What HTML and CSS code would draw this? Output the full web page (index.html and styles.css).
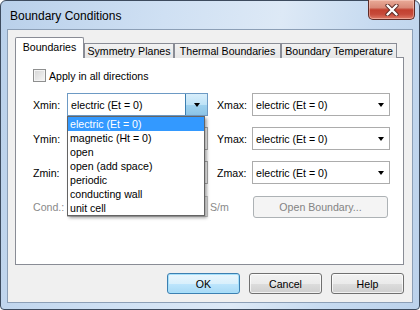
FILE: index.html
```html
<!DOCTYPE html>
<html lang="en">
<head>
    <meta charset="UTF-8">
    <title>Boundary Conditions</title>
    <link rel="stylesheet" href="styles.css">
</head>
<body>
    <div class="window">
        <div class="titlebar">
            <span class="title">Boundary Conditions</span>
            <div class="close">
                <svg width="14" height="12" viewBox="0 0 14 12">
                    <path d="M2.5 1.5 L11.5 10.5 M11.5 1.5 L2.5 10.5" stroke="#5a2a25" stroke-width="4.2" stroke-linecap="round"/>
                    <path d="M2.5 1.5 L11.5 10.5 M11.5 1.5 L2.5 10.5" stroke="#ffffff" stroke-width="2.4" stroke-linecap="round"/>
                </svg>
            </div>
        </div>

        <div class="client">
            <div class="tabs">
                <div class="tab active" style="width: 69px">Boundaries</div>
                <div class="tab" style="width: 90px">Symmetry Planes</div>
                <div class="tab" style="width: 107px">Thermal Boundaries</div>
                <div class="tab" style="width: 116px">Boundary Temperature</div>
            </div>

            <div class="panel">
                <label class="check"><span class="box"></span>Apply in all directions</label>

                <div class="grid">
                    <span class="lbl">Xmin:</span>
                    <div class="combo open">
                        <span class="value">electric (Et = 0)</span>
                        <span class="btn"><span class="arrow"></span></span>
                        <ul class="list">
                            <li class="selected">electric (Et = 0)</li>
                            <li>magnetic (Ht = 0)</li>
                            <li>open</li>
                            <li>open (add space)</li>
                            <li>periodic</li>
                            <li>conducting wall</li>
                            <li>unit cell</li>
                        </ul>
                    </div>
                    <span></span>
                    <span class="lbl">Xmax:</span>
                    <div class="combo">
                        <span class="value">electric (Et = 0)</span>
                        <span class="arrow"></span>
                    </div>

                    <span class="lbl">Ymin:</span>
                    <div class="combo">
                        <span class="value"></span>
                        <span class="arrow"></span>
                    </div>
                    <span></span>
                    <span class="lbl">Ymax:</span>
                    <div class="combo">
                        <span class="value">electric (Et = 0)</span>
                        <span class="arrow"></span>
                    </div>

                    <span class="lbl">Zmin:</span>
                    <div class="combo">
                        <span class="value"></span>
                        <span class="arrow"></span>
                    </div>
                    <span></span>
                    <span class="lbl">Zmax:</span>
                    <div class="combo">
                        <span class="value">electric (Et = 0)</span>
                        <span class="arrow"></span>
                    </div>

                    <span class="lbl disabled">Cond.:</span>
                    <div class="edit"></div>
                    <span class="lbl disabled unit">S/m</span>
                    <button class="push wide" disabled>Open Boundary...</button>
                </div>
            </div>

            <div class="actions">
                <button class="push default">OK</button>
                <button class="push">Cancel</button>
                <button class="push">Help</button>
            </div>
        </div>
    </div>
</body>
</html>
```

FILE: styles.css
```css
body {
    margin: 0;
    font-family: "Liberation Sans", Arial, sans-serif;
    font-size: 10.6px;
    color: #000;
    background: #fff;
}

.window {
    width: 420px;
    height: 310px;
    box-sizing: border-box;
    border: 1px solid #3d4b5e;
    border-radius: 6px 6px 4px 4px;
    padding: 0 6px 6px 6px;
    display: flex;
    flex-direction: column;
    background: linear-gradient(100deg, #b9d0ea 0%, #cfe0f3 35%, #dde9f6 60%, #c6daf0 80%, #bcd2eb 100%);
}

.titlebar {
    height: 28px;
    display: flex;
    justify-content: space-between;
    align-items: flex-start;
}

.title {
    font-size: 12px;
    margin-left: 3px;
    padding-top: 8px;
    color: #000;
}

.close {
    width: 47px;
    height: 20px;
    box-sizing: border-box;
    margin-top: -1px;
    margin-right: -2px;
    border: 1px solid #5e2b26;
    border-top: none;
    border-radius: 0 0 5px 5px;
    background: linear-gradient(#e9ab98 0%, #d98a78 40%, #c2402f 52%, #c64a3a 75%, #de7a66 100%);
    box-shadow: inset 0 0 0 1px rgba(255, 220, 210, 0.45);
    display: flex;
    align-items: center;
    justify-content: center;
}

.client {
    flex: 1;
    background: #f0f0f0;
    border: 1px solid #8c9fb6;
    padding: 8px 8px 0 7px;
    display: flex;
    flex-direction: column;
}

.tabs {
    display: flex;
    align-items: flex-end;
    height: 20px;
    position: relative;
    z-index: 1;
    margin-bottom: -1px;
}

.tab {
    box-sizing: border-box;
    height: 15px;
    border: 1px solid #898c95;
    border-bottom: none;
    text-align: center;
    line-height: 14px;
    background: linear-gradient(#f2f2f2, #e6e6e6);
    white-space: nowrap;
}

.tab.active {
    height: 21px;
    line-height: 18px;
    background: #fff;
    border-radius: 2px 2px 0 0;
}

.panel {
    box-sizing: border-box;
    height: 208px;
    background: #fff;
    border: 1px solid #898c95;
    padding: 11px 17px 0 17px;
}

.check {
    display: flex;
    align-items: center;
    gap: 3px;
    height: 13px;
}

.box {
    width: 13px;
    height: 13px;
    box-sizing: border-box;
    border: 1px solid #8e8f8f;
    background: linear-gradient(135deg, #d4d4d4, #f7f7f7);
    box-shadow: inset 0 0 0 1px #f4f4f4;
}

.grid {
    margin-top: 11px;
    display: grid;
    grid-template-columns: 34px 141px 9px 35px 138px;
    grid-auto-rows: 23px;
    row-gap: 11px;
    align-items: center;
}

.lbl {
    white-space: nowrap;
}

.lbl.disabled {
    color: #8a8a8a;
}

.lbl.unit {
    grid-column: 3 / 5;
    padding-left: 2px;
}

.combo {
    height: 23px;
    box-sizing: border-box;
    border: 1px solid #acacac;
    background: #fff;
    display: flex;
    align-items: center;
    position: relative;
}

.combo .value {
    flex: 1;
    padding-left: 3px;
    white-space: nowrap;
}

.arrow {
    width: 0;
    height: 0;
    border-left: 3.5px solid transparent;
    border-right: 3.5px solid transparent;
    border-top: 4px solid #000;
    margin-right: 5px;
}

.combo.open {
    border-color: #6d9ac4;
}

.combo .btn {
    align-self: stretch;
    width: 21px;
    border-left: 1px solid #3c7fb1;
    background: linear-gradient(#d8eefb 0%, #bfe3f7 50%, #9fd2ef 51%, #8cc4e6 100%);
    display: flex;
    align-items: center;
    justify-content: center;
}

.combo .btn .arrow {
    margin-right: 0;
}

.list {
    list-style: none;
    margin: 0;
    padding: 0;
    position: absolute;
    top: 22px;
    left: -1px;
    width: 138px;
    box-sizing: border-box;
    border: 1px solid #646464;
    background: #fff;
    box-shadow: 2px 2px 3px rgba(0, 0, 0, 0.35);
    z-index: 2;
}

.list li {
    height: 14px;
    line-height: 14px;
    padding-left: 2px;
    white-space: nowrap;
}

.list li.selected {
    background: #3399ff;
    color: #fff;
}

.edit {
    height: 21px;
    box-sizing: border-box;
    border: 1px solid #c9c9c9;
    background: #f4f4f4;
}

.push {
    font-family: "Liberation Sans", Arial, sans-serif;
    font-size: 10.6px;
    color: #000;
    width: 73px;
    height: 21px;
    padding: 0;
    box-sizing: border-box;
    border: 1px solid #707070;
    border-radius: 3px;
    background: linear-gradient(#f2f2f2 0%, #ebebeb 50%, #dddddd 51%, #cfcfcf 100%);
    box-shadow: inset 0 0 0 1px rgba(255, 255, 255, 0.7);
}

.push.default {
    border-color: #3c7fb1;
    background: linear-gradient(#eaf6fd 0%, #d9f0fc 50%, #bee6fd 51%, #a7d9f5 100%);
    box-shadow: inset 0 0 0 1px #a6e0fb;
}

.push.wide {
    width: 135px;
    height: 22px;
    margin-left: 1px;
    color: #838383;
    border-color: #adb2b5;
    background: #f4f4f4;
    box-shadow: none;
}

.actions {
    margin-top: 8px;
    display: flex;
    justify-content: flex-end;
    gap: 9px;
}
```
